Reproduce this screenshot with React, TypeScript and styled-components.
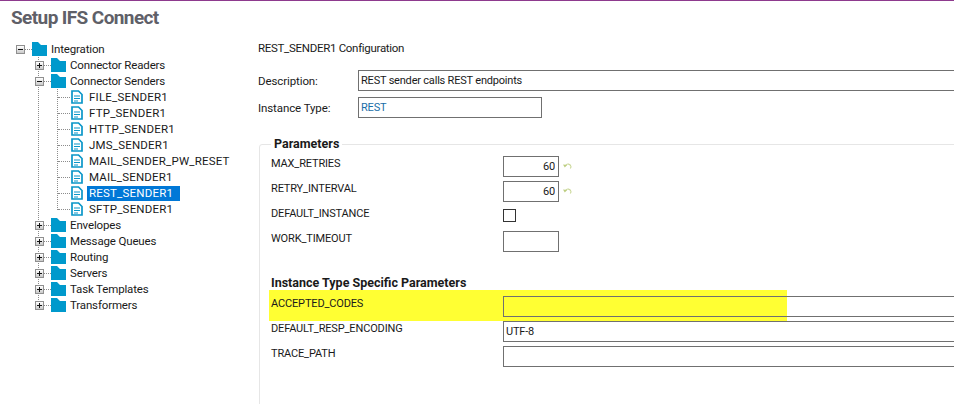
import styled, { createGlobalStyle } from "styled-components";

const GlobalStyle = createGlobalStyle`
  html, body {
    margin: 0;
    height: 404px;
    overflow: hidden;
    background: #fff;
  }
  body {
    font-family: "Roboto", "Liberation Sans", Arial, sans-serif;
    font-size: 11px;
    color: #1a1a1a;
  }
`;

const TopLine = styled.div`
  height: 1px;
  background: #8e3a8e;
`;

const Header = styled.h1`
  height: 34px;
  margin: 0;
  padding-left: 11px;
  font-family: "Roboto", "Liberation Sans", sans-serif;
  font-size: 19px;
  font-weight: 700;
  letter-spacing: -0.6px;
  line-height: 34px;
  color: #5f6068;
`;

const Body = styled.div`
  display: flex;
`;

const Sidebar = styled.nav`
  flex: 0 0 258px;
  padding-top: 6px;
`;

const Row = styled.div<{ $level: number }>`
  display: flex;
  align-items: center;
  height: 16px;
  padding-left: ${({ $level }) => [16, 35, 58][$level]}px;
  white-space: nowrap;
`;

const Group = styled.div<{ $lineLeft: number; $lineBottom: number }>`
  position: relative;

  &::before {
    content: "";
    position: absolute;
    left: ${({ $lineLeft }) => $lineLeft}px;
    top: 0;
    bottom: ${({ $lineBottom }) => $lineBottom}px;
    border-left: 1px dotted #8c8c8c;
  }
`;

const Expander = styled.span<{ $open?: boolean }>`
  position: relative;
  flex: none;
  width: 7px;
  height: 7px;
  border: 1px solid #8f8f8f;
  background: linear-gradient(#ffffff, #c9c9c9);

  &::before {
    content: "";
    position: absolute;
    left: 1px;
    top: 3px;
    width: 5px;
    height: 1px;
    background: #111;
  }

  &::after {
    content: "";
    display: ${({ $open }) => ($open ? "none" : "block")};
    position: absolute;
    left: 3px;
    top: 1px;
    width: 1px;
    height: 5px;
    background: #111;
  }
`;

const Dash = styled.span<{ $width: number }>`
  flex: none;
  width: ${({ $width }) => $width}px;
  border-top: 1px dotted #8c8c8c;
`;

const FolderLabel = styled.span`
  padding: 0 2px;
  font-size: 11.5px;
  letter-spacing: -0.15px;
  line-height: 15px;
`;

const DocLabel = styled.span<{ $selected?: boolean }>`
  padding: ${({ $selected }) => ($selected ? "0 7px 0 2px" : "0 2px")};
  font-size: 11.5px;
  letter-spacing: 0.2px;
  line-height: 15px;
  color: ${({ $selected }) => ($selected ? "#fff" : "#1a1a1a")};
  background: ${({ $selected }) => ($selected ? "#0078d7" : "transparent")};
`;

const FolderSvg = styled.svg`
  flex: none;
  margin-right: 2px;
`;

const DocSvg = styled.svg`
  flex: none;
  margin: 0 4px 0 1px;
`;

const Main = styled.main`
  flex: 1;
  padding-top: 5px;
  min-width: 0;
`;

const ConfigTitle = styled.div`
  height: 16px;
  font-size: 11.5px;
  letter-spacing: -0.3px;
  line-height: 16px;
  margin-bottom: 14px;
`;

const HeadRow = styled.div`
  display: grid;
  grid-template-columns: 100px 1fr;
  align-items: center;
  margin-bottom: 6px;
  font-size: 11.5px;
  letter-spacing: -0.1px;
`;

const Field = styled.input<{ $width: number; $align?: string; $blue?: boolean; $clear?: boolean }>`
  box-sizing: border-box;
  display: block;
  width: ${({ $width }) => $width}px;
  height: 21px;
  margin: 0;
  padding: 0 3px 0 2px;
  border: 1px solid #707070;
  border-radius: 0;
  outline: none;
  font: 11px "Roboto", "Liberation Sans", Arial, sans-serif;
  letter-spacing: -0.2px;
  color: ${({ $blue }) => ($blue ? "#1a6ea8" : "#1a1a1a")};
  text-align: ${({ $align }) => $align ?? "left"};
  background: ${({ $clear }) => ($clear ? "transparent" : "#fff")};
`;

const Checkbox = styled.input`
  appearance: none;
  display: block;
  width: 13px;
  height: 13px;
  margin: 3px 0 0;
  border: 1px solid #333;
  background: #fff;
`;

const Fieldset = styled.fieldset`
  width: 760px;
  height: 300px;
  margin: 19px 0 0 1px;
  padding: 5px 0 0 11px;
  border: 1px solid #e6e6e6;
  border-radius: 3px;
`;

const Legend = styled.legend`
  margin-left: 0;
  padding: 0 3px;
  font-size: 12.5px;
  font-weight: 700;
  line-height: 14px;
`;

const ParamRow = styled.div`
  position: relative;
  isolation: isolate;
  display: grid;
  grid-template-columns: 232px 1fr;
  height: 25px;
`;

const ParamLabel = styled.span`
  padding-top: 1px;
  letter-spacing: -0.15px;
  line-height: 14px;
`;

const Value = styled.div`
  display: flex;
  align-items: flex-start;
  gap: 4px;
`;

const RevertIcon = styled.svg`
  margin-top: 6px;
`;

const SectionHeading = styled.div`
  margin: 20px 0 6px;
  font-size: 12.5px;
  font-weight: 700;
  line-height: 14px;
`;

const Highlight = styled.span`
  position: absolute;
  z-index: -1;
  left: -2px;
  top: -6px;
  width: 518px;
  height: 31px;
  background: #ffff33;
`;

function Folder() {
  return (
    <FolderSvg width="15" height="14" viewBox="0 0 15 14">
      <path d="M0 0h6l3 3h6v11H0z" fill="#0099cc" />
    </FolderSvg>
  );
}

function Doc() {
  return (
    <DocSvg width="12" height="14" viewBox="0 0 12 14">
      <path d="M1 1h6.5L11 4.5V13H1z" fill="#fff" stroke="#0a96c8" strokeWidth="1.7" />
      <path d="M3 6h6M3 8.5h6M3 11h4" stroke="#0a96c8" strokeWidth="1.1" />
    </DocSvg>
  );
}

function Revert() {
  return (
    <RevertIcon width="9" height="7" viewBox="0 0 9 7">
      <path d="M2.5 3.5A3 3 0 0 1 8 4.5c0 .7-.3 1.4-.8 2" fill="none" stroke="#cbd89a" strokeWidth="1.1" />
      <path d="M0 2.5l4.2.4-2.4 2.6z" fill="#bccd80" />
    </RevertIcon>
  );
}

const senders = [
  "FILE_SENDER1",
  "FTP_SENDER1",
  "HTTP_SENDER1",
  "JMS_SENDER1",
  "MAIL_SENDER_PW_RESET",
  "MAIL_SENDER1",
  "REST_SENDER1",
  "SFTP_SENDER1",
];

const afterSenders = [
  "Envelopes",
  "Message Queues",
  "Routing",
  "Servers",
  "Task Templates",
  "Transformers",
];

function FolderRow({ name, open }: { name: string; open?: boolean }) {
  return (
    <Row $level={1}>
      <Expander $open={open} />
      <Dash $width={7} />
      <Folder />
      <FolderLabel>{name}</FolderLabel>
    </Row>
  );
}

export default function App() {
  return (
    <>
      <GlobalStyle />
      <TopLine />
      <Header>Setup IFS Connect</Header>
      <Body>
        <Sidebar>
          <Row $level={0}>
            <Expander $open />
            <Dash $width={7} />
            <Folder />
            <FolderLabel>Integration</FolderLabel>
          </Row>
          <Group $lineLeft={38} $lineBottom={13}>
            <FolderRow name="Connector Readers" />
            <FolderRow name="Connector Senders" open />
            <Group $lineLeft={57} $lineBottom={7}>
              {senders.map((name) => (
                <Row $level={2} key={name}>
                  <Dash $width={12} />
                  <Doc />
                  <DocLabel $selected={name === "REST_SENDER1"}>{name}</DocLabel>
                </Row>
              ))}
            </Group>
            {afterSenders.map((name) => (
              <FolderRow name={name} key={name} />
            ))}
          </Group>
        </Sidebar>

        <Main>
          <ConfigTitle>REST_SENDER1 Configuration</ConfigTitle>
          <HeadRow>
            <span>Description:</span>
            <Field $width={620} readOnly value="REST sender calls REST endpoints" />
          </HeadRow>
          <HeadRow>
            <span>Instance Type:</span>
            <Field $width={184} $blue readOnly value="REST" />
          </HeadRow>

          <Fieldset>
            <Legend>Parameters</Legend>
            <ParamRow>
              <ParamLabel>MAX_RETRIES</ParamLabel>
              <Value>
                <Field $width={56} $align="right" readOnly value="60" />
                <Revert />
              </Value>
            </ParamRow>
            <ParamRow>
              <ParamLabel>RETRY_INTERVAL</ParamLabel>
              <Value>
                <Field $width={56} $align="right" readOnly value="60" />
                <Revert />
              </Value>
            </ParamRow>
            <ParamRow>
              <ParamLabel>DEFAULT_INSTANCE</ParamLabel>
              <Value>
                <Checkbox type="checkbox" readOnly />
              </Value>
            </ParamRow>
            <ParamRow>
              <ParamLabel>WORK_TIMEOUT</ParamLabel>
              <Value>
                <Field $width={56} readOnly value="" />
              </Value>
            </ParamRow>

            <SectionHeading>Instance Type Specific Parameters</SectionHeading>
            <ParamRow>
              <Highlight />
              <ParamLabel>ACCEPTED_CODES</ParamLabel>
              <Value>
                <Field $width={480} $clear readOnly value="" />
              </Value>
            </ParamRow>
            <ParamRow>
              <ParamLabel>DEFAULT_RESP_ENCODING</ParamLabel>
              <Value>
                <Field $width={480} readOnly value="UTF-8" />
              </Value>
            </ParamRow>
            <ParamRow>
              <ParamLabel>TRACE_PATH</ParamLabel>
              <Value>
                <Field $width={480} readOnly value="" />
              </Value>
            </ParamRow>
          </Fieldset>
        </Main>
      </Body>
    </>
  );
}
